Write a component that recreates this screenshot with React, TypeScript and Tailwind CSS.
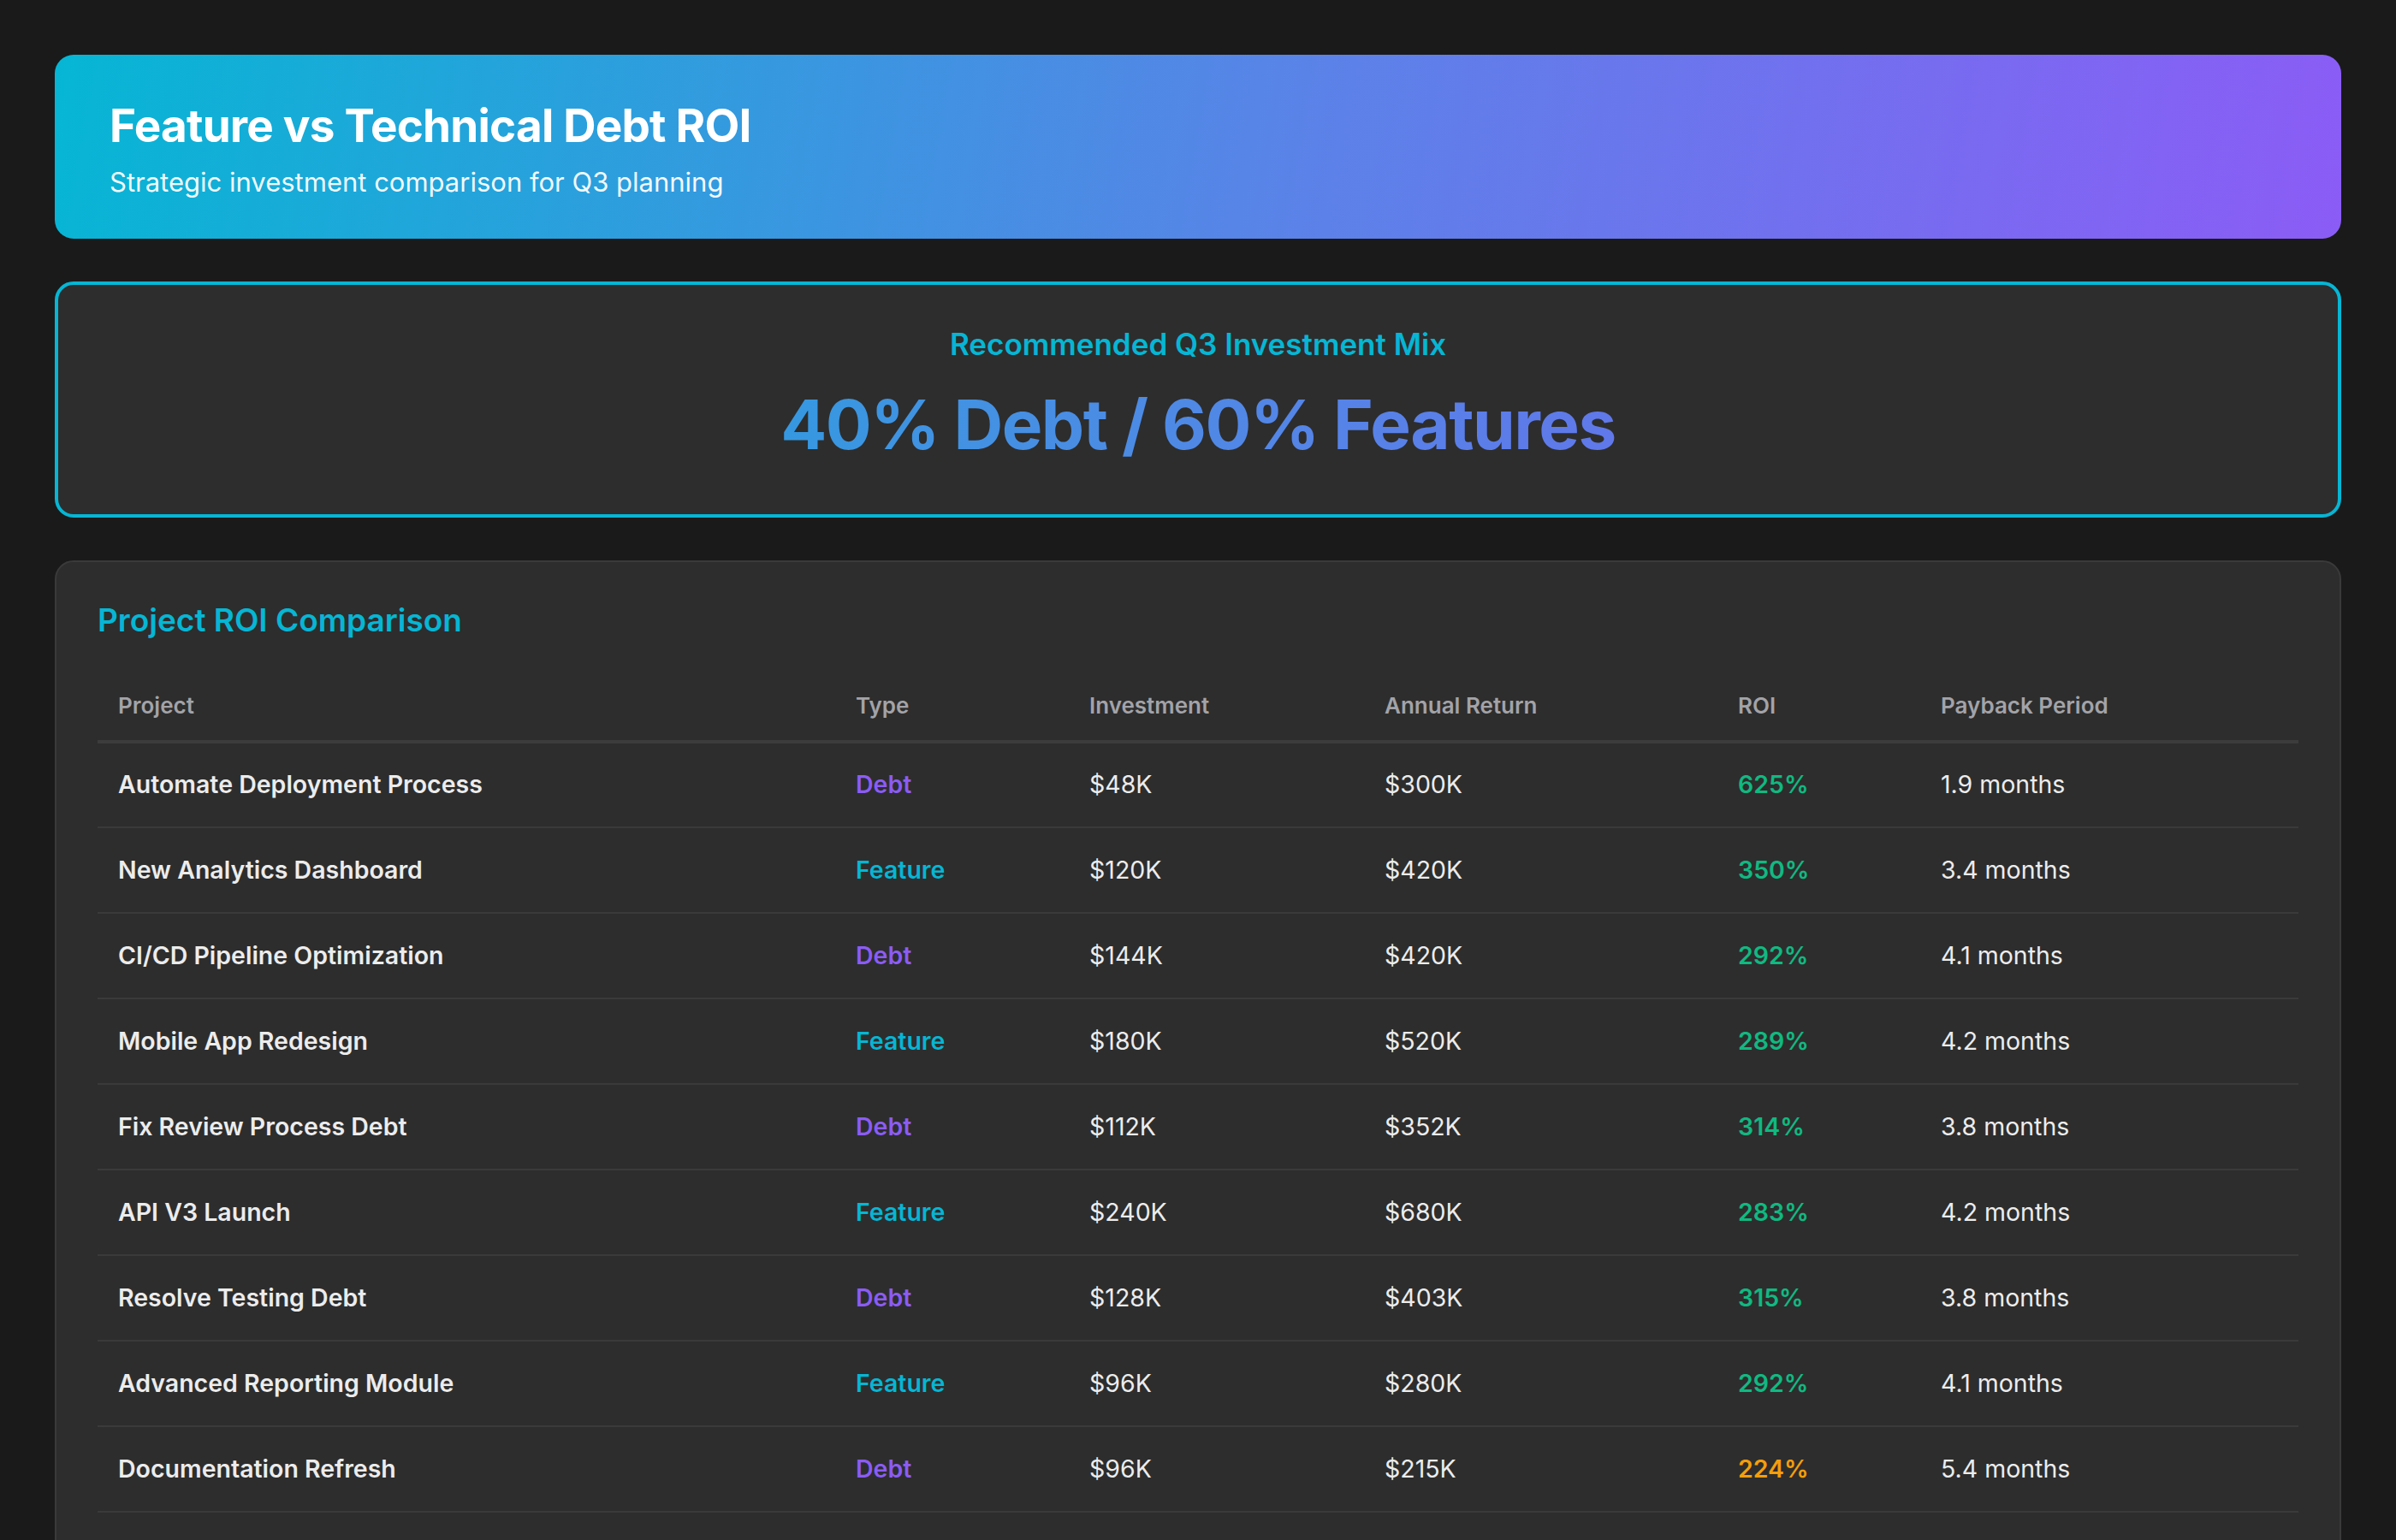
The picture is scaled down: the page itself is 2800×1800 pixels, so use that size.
import React from "react";

const rows = [
  ["Automate Deployment Process", "Debt", "$48K", "$300K", "625%", "1.9 months"],
  ["New Analytics Dashboard", "Feature", "$120K", "$420K", "350%", "3.4 months"],
  ["CI/CD Pipeline Optimization", "Debt", "$144K", "$420K", "292%", "4.1 months"],
  ["Mobile App Redesign", "Feature", "$180K", "$520K", "289%", "4.2 months"],
  ["Fix Review Process Debt", "Debt", "$112K", "$352K", "314%", "3.8 months"],
  ["API V3 Launch", "Feature", "$240K", "$680K", "283%", "4.2 months"],
  ["Resolve Testing Debt", "Debt", "$128K", "$403K", "315%", "3.8 months"],
  ["Advanced Reporting Module", "Feature", "$96K", "$280K", "292%", "4.1 months"],
  ["Documentation Refresh", "Debt", "$96K", "$215K", "224%", "5.4 months"],
  ["Social Integration", "Feature", "$72K", "$160K", "222%", "5.4 months"],
];

export default function App() {
  return (
    <div
      className="min-h-screen bg-[#1a1a1a] px-[64px] pt-[64px] pb-[64px]"
      style={{ fontFamily: "Inter, 'Noto Sans', sans-serif" }}
    >
      <div className="rounded-[22px] bg-[linear-gradient(100deg,#06b6d4_0%,#5b82e8_55%,#8b5cf6_100%)] px-[64px] pt-[49px] pb-[46px] text-white">
        <h1 className="text-[53px] font-bold leading-[68px] tracking-[-0.8px]">Feature vs Technical Debt ROI</h1>
        <p className="mt-[12px] text-[31px] leading-[40px] text-white/95">Strategic investment comparison for Q3 planning</p>
      </div>

      <div className="mt-[50px] rounded-[22px] border-[4px] border-[#06b6d4] bg-[#2d2d2d] pt-[47px] pb-[30px] text-center">
        <div className="text-[35px] font-semibold leading-[44px] text-[#06b6d4]">Recommended Q3 Investment Mix</div>
        <div className="mt-[20px] leading-[104px]">
          <span className="inline-block bg-gradient-to-r from-[#3598e0] to-[#6078ea] bg-clip-text text-[80px] font-bold tracking-[-1.5px] text-transparent">
            40% Debt / 60% Features
          </span>
        </div>
      </div>

      <div className="mt-[50px] rounded-[22px] border-[2px] border-[#3a3a3a] bg-[#2d2d2d] px-[48px] pt-[44px] pb-[40px]">
        <h2 className="text-[37px] font-semibold leading-[48px] text-[#06b6d4]">Project ROI Comparison</h2>
        <table className="mt-[36px] w-full border-collapse text-left">
          <thead>
            <tr className="border-b-[4px] border-[#3c3c3c]">
              {["Project", "Type", "Investment", "Annual Return", "ROI", "Payback Period"].map((h, i) => (
                <th
                  key={h}
                  className={`px-[24px] py-[23px] text-[26px] font-semibold leading-[34px] text-[#a3a3a8] ${
                    ["w-[862px]", "w-[273px]", "w-[345px]", "w-[413px]", "w-[237px]", ""][i]
                  }`}
                >
                  {h}
                </th>
              ))}
            </tr>
          </thead>
          <tbody>
            {rows.map((r) => {
              const roi = parseInt(r[4]);
              return (
                <tr key={r[0]} className="border-b-[2px] border-[#3a3a3a]">
                  <td className="h-[100px] px-[24px] text-[28.5px] font-semibold text-[#ececec]">{r[0]}</td>
                  <td
                    className={`px-[24px] text-[28.5px] font-semibold ${
                      r[1] === "Debt" ? "text-[#8b5cf6]" : "text-[#06b6d4]"
                    }`}
                  >
                    {r[1]}
                  </td>
                  <td className="px-[24px] text-[28.5px] text-[#ececec]">{r[2]}</td>
                  <td className="px-[24px] text-[28.5px] text-[#ececec]">{r[3]}</td>
                  <td
                    className={`px-[24px] text-[28.5px] font-semibold ${
                      roi < 250 ? "text-[#f59e0b]" : "text-[#10b981]"
                    }`}
                  >
                    {r[4]}
                  </td>
                  <td className="px-[24px] text-[28.5px] text-[#ececec]">{r[5]}</td>
                </tr>
              );
            })}
          </tbody>
        </table>
      </div>
    </div>
  );
}
